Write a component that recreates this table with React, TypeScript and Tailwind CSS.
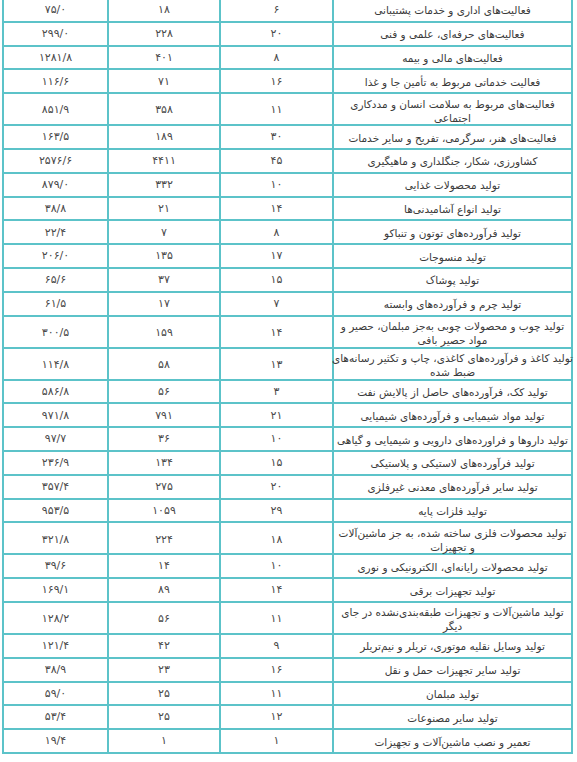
const rows: { name: string[]; a: string; b: string; c: string }[] = [
  { name: ['فعالیت‌های اداری و خدمات پشتیبانی'], a: '۶', b: '۱۸', c: '۷۵/۰' },
  { name: ['فعالیت‌های حرفه‌ای، علمی و فنی'], a: '۲۰', b: '۲۲۸', c: '۲۹۹/۰' },
  { name: ['فعالیت‌های مالی و بیمه'], a: '۸', b: '۴۰۱', c: '۱۲۸۱/۸' },
  { name: ['فعالیت خدماتی مربوط به تأمین جا و غذا'], a: '۱۶', b: '۷۱', c: '۱۱۶/۶' },
  { name: ['فعالیت‌های مربوط به سلامت انسان و مددکاری', 'اجتماعی'], a: '۱۱', b: '۳۵۸', c: '۸۵۱/۹' },
  { name: ['فعالیت‌های هنر، سرگرمی، تفریح و سایر خدمات'], a: '۳۰', b: '۱۸۹', c: '۱۶۳/۵' },
  { name: ['کشاورزی، شکار، جنگلداری و ماهیگیری'], a: '۴۵', b: '۴۴۱۱', c: '۲۵۷۶/۶' },
  { name: ['تولید محصولات غذایی'], a: '۱۰', b: '۳۳۲', c: '۸۷۹/۰' },
  { name: ['تولید انواع آشامیدنی‌ها'], a: '۱۴', b: '۲۱', c: '۳۸/۸' },
  { name: ['تولید فرآورده‌های توتون و تنباکو'], a: '۸', b: '۷', c: '۲۲/۴' },
  { name: ['تولید منسوجات'], a: '۱۷', b: '۱۳۵', c: '۲۰۶/۰' },
  { name: ['تولید پوشاک'], a: '۱۵', b: '۳۷', c: '۶۵/۶' },
  { name: ['تولید چرم و فرآورده‌های وابسته'], a: '۷', b: '۱۷', c: '۶۱/۵' },
  { name: ['تولید چوب و محصولات چوبی به‌جز مبلمان، حصیر و', 'مواد حصیر بافی'], a: '۱۴', b: '۱۵۹', c: '۳۰۰/۵' },
  { name: ['تولید کاغذ و فرآورده‌های کاغذی، چاپ و تکثیر رسانه‌های', 'ضبط شده'], a: '۱۳', b: '۵۸', c: '۱۱۴/۸' },
  { name: ['تولید کک، فرآورده‌های حاصل از پالایش نفت'], a: '۳', b: '۵۶', c: '۵۸۶/۸' },
  { name: ['تولید مواد شیمیایی و فرآورده‌های شیمیایی'], a: '۲۱', b: '۷۹۱', c: '۹۷۱/۸' },
  { name: ['تولید داروها و فراورده‌های دارویی و شیمیایی و گیاهی'], a: '۱۰', b: '۳۶', c: '۹۷/۷' },
  { name: ['تولید فرآورده‌های لاستیکی و پلاستیکی'], a: '۱۵', b: '۱۳۴', c: '۲۳۶/۹' },
  { name: ['تولید سایر فرآورده‌های معدنی غیرفلزی'], a: '۲۰', b: '۲۷۵', c: '۳۵۷/۴' },
  { name: ['تولید فلزات پایه'], a: '۲۹', b: '۱۰۵۹', c: '۹۵۳/۵' },
  { name: ['تولید محصولات فلزی ساخته شده، به جز ماشین‌آلات', 'و تجهیزات'], a: '۱۸', b: '۲۲۴', c: '۳۲۱/۸' },
  { name: ['تولید محصولات رایانه‌ای، الکترونیکی و نوری'], a: '۱۰', b: '۱۴', c: '۳۹/۶' },
  { name: ['تولید تجهیزات برقی'], a: '۱۴', b: '۸۹', c: '۱۶۹/۱' },
  { name: ['تولید ماشین‌آلات و تجهیزات طبقه‌بندی‌نشده در جای', 'دیگر'], a: '۱۱', b: '۵۶', c: '۱۲۸/۲' },
  { name: ['تولید وسایل نقلیه موتوری، تریلر و نیم‌تریلر'], a: '۹', b: '۴۲', c: '۱۲۱/۴' },
  { name: ['تولید سایر تجهیزات حمل و نقل'], a: '۱۶', b: '۲۳', c: '۳۸/۹' },
  { name: ['تولید مبلمان'], a: '۱۱', b: '۲۵', c: '۵۹/۰' },
  { name: ['تولید سایر مصنوعات'], a: '۱۲', b: '۲۵', c: '۵۳/۴' },
  { name: ['تعمیر و نصب ماشین‌آلات و تجهیزات'], a: '۱', b: '۱', c: '۱۹/۴' },
]

export default function App() {
  return (
    <div className="min-h-screen overflow-hidden bg-white">
      <div
        dir="rtl"
        className="-mt-px ml-[2px] grid w-[571px] grid-cols-[241px_113px_112px_105px] text-[11px] text-[#3a3a3a] font-['DejaVu_Sans',sans-serif]"
      >
        {rows.map((row, i) => {
          const tall = row.name.length > 1
          const h = tall ? 'h-[32px] pt-[3px]' : 'h-[23.8px] pt-px'
          return (
            <div key={i} className="contents">
              <div className={`${h} flex flex-col items-center justify-center border-x-2 border-b-2 border-[#5cc3c9] px-1 text-center text-[10.5px] leading-[14px] whitespace-nowrap`}>
                {row.name.map((line, j) => <span key={j}>{line}</span>)}
              </div>
              <div className={`${h} flex items-center justify-center border-l-2 border-b-2 border-[#5cc3c9] text-[#4a4a4a]`}>{row.a}</div>
              <div className={`${h} flex items-center justify-center border-l-2 border-b-2 border-[#5cc3c9] text-[#4a4a4a]`}>{row.b}</div>
              <div className={`${h} flex items-center justify-center border-l-2 border-b-2 border-[#5cc3c9] text-[#4a4a4a]`}>{row.c}</div>
            </div>
          )
        })}
      </div>
    </div>
  )
}
